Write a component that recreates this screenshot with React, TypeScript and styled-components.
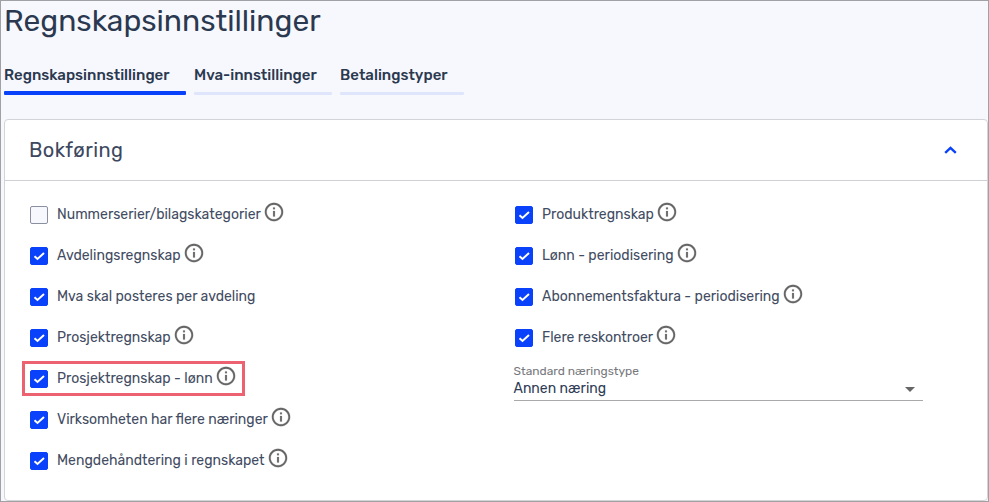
import React from "react";
import styled, { createGlobalStyle } from "styled-components";

const GlobalStyle = createGlobalStyle`
  *, *::before, *::after { box-sizing: border-box; }
  body { margin: 0; }
`;

const Page = styled.div`
  width: 989px;
  height: 502px;
  overflow: hidden;
  display: flex;
  flex-direction: column;
  padding: 0 0 0 3px;
  border: 1px solid #a0a0a5;
  background: #f7f8fd;
  color: #2b3950;
  font-family: Rubik, Roboto, "Liberation Sans", sans-serif;
`;

const Title = styled.h1`
  margin: 0;
  height: 62px;
  padding-top: 1px;
  font-size: 30px;
  line-height: 38px;
  font-weight: 400;
  white-space: nowrap;
`;

const Tabs = styled.nav`
  display: flex;
  gap: 8px;
  height: 32px;
`;

const Tab = styled.a<{ $width: number; $active?: boolean }>`
  width: ${(p) => p.$width}px;
  height: 32px;
  padding-top: 2px;
  font-size: 15px;
  line-height: 20px;
  font-weight: 500;
  white-space: nowrap;
  display: flex;
  flex-direction: column;
  justify-content: space-between;
  &::after {
    content: "";
    height: ${(p) => (p.$active ? 4 : 3)}px;
    border-radius: 1px;
    background: ${(p) => (p.$active ? "#0a41fa" : "#dfe6fb")};
  }
`;

const Card = styled.section`
  margin-top: 24px;
  width: 984px;
  height: 382px;
  flex: none;
  border: 1px solid #d3d4d8;
  border-radius: 4px;
  background: #fff;
`;

const CardHeader = styled.header`
  height: 61px;
  display: flex;
  align-items: center;
  justify-content: space-between;
  padding: 0 30px 0 24px;
  border-bottom: 1px solid #cfd0d4;
`;

const CardTitle = styled.h2`
  margin: 0;
  font-size: 20px;
  line-height: 28px;
  font-weight: 400;
  letter-spacing: 0.4px;
  color: #3d485f;
`;

const Columns = styled.div`
  display: grid;
  grid-template-columns: 485px 410px;
  padding: 13px 0 0 25px;
`;

const Column = styled.div`
  display: flex;
  flex-direction: column;
`;

const Row = styled.div`
  height: 41px;
  display: flex;
  align-items: center;
`;

const Highlight = styled.div`
  width: 223px;
  height: 35px;
  margin: 3px 0 3px -8px;
  padding-left: 5px;
  border: 3px solid #ec6270;
  display: flex;
  align-items: center;
`;

const Box = styled.span<{ $checked: boolean }>`
  flex: none;
  width: 18px;
  height: 18px;
  margin-top: 1px;
  border-radius: 2px;
  border: 1px solid ${(p) => (p.$checked ? "#0a41fa" : "#8b90a0")};
  background: ${(p) => (p.$checked ? "#0a41fa" : "#f7f8fd")};
  display: flex;
  align-items: center;
  justify-content: center;
`;

const Label = styled.span`
  flex: none;
  margin-left: 9px;
  font-size: 14px;
  line-height: 20px;
  white-space: nowrap;
  color: #424c62;
`;

const InfoSvg = styled.svg`
  flex: none;
  margin: -5px 0 0 2px;
  fill: #666;
  stroke: #666;
  stroke-width: 0.2;
`;

const Field = styled.div`
  width: 409px;
  height: 42px;
  margin: 1px 0 0 -1.5px;
  border-bottom: 1px solid #a9a9ac;
`;

const FieldLabel = styled.div`
  padding-top: 4px;
  font-size: 12px;
  line-height: 16px;
  color: #77787d;
`;

const FieldValue = styled.div`
  display: flex;
  align-items: center;
  justify-content: space-between;
  padding-right: 8px;
  font-size: 14px;
  line-height: 20px;
  color: #2f3c55;
`;

function Info() {
  return (
    <InfoSvg width="22" height="22" viewBox="0 0 24 24">
      <path d="M11 7h2v2h-2zm0 4h2v6h-2zm1-9C6.48 2 2 6.48 2 12s4.480 10 10 10 10-4.480 10-10S17.520 2 12 2zm0 18c-4.410 0-8-3.590-8-8s3.590-8 8-8 8 3.590 8 8-3.590 8-8 8z" />
    </InfoSvg>
  );
}

interface Option {
  text: string;
  checked?: boolean;
  info?: boolean;
  highlighted?: boolean;
}

const left: Option[] = [
  { text: "Nummerserier/bilagskategorier", checked: false },
  { text: "Avdelingsregnskap" },
  { text: "Mva skal posteres per avdeling", info: false },
  { text: "Prosjektregnskap" },
  { text: "Prosjektregnskap - lønn", highlighted: true },
  { text: "Virksomheten har flere næringer" },
  { text: "Mengdehåndtering i regnskapet" },
];

const right: Option[] = [
  { text: "Produktregnskap" },
  { text: "Lønn - periodisering" },
  { text: "Abonnementsfaktura - periodisering" },
  { text: "Flere reskontroer" },
];

function OptionRow({ text, checked = true, info = true, highlighted }: Option) {
  const content = (
    <>
      <Box $checked={checked}>
        {checked && (
          <svg width="16" height="16" viewBox="0 0 16 16" fill="none" stroke="#fff" strokeWidth="2">
            <path d="M3.500 8.200 6.500 11 13 5" />
          </svg>
        )}
      </Box>
      <Label>{text}</Label>
      {info && <Info />}
    </>
  );
  return highlighted ? <Highlight>{content}</Highlight> : <Row>{content}</Row>;
}

export default function App() {
  return (
    <>
      <GlobalStyle />
      <Page>
        <Title>Regnskapsinnstillinger</Title>
        <Tabs>
          <Tab $width={182} $active>Regnskapsinnstillinger</Tab>
          <Tab $width={138}>Mva-innstillinger</Tab>
          <Tab $width={124}>Betalingstyper</Tab>
        </Tabs>
        <Card>
          <CardHeader>
            <CardTitle>Bokføring</CardTitle>
            <svg width="13" height="8" viewBox="0 0 13 8" fill="none" stroke="#0a41fa" strokeWidth="2.4">
              <path d="M1.200 6.800 6.500 1.800 11.800 6.800" />
            </svg>
          </CardHeader>
          <Columns>
            <Column>
              {left.map((o) => <OptionRow key={o.text} {...o} />)}
            </Column>
            <Column>
              {right.map((o) => <OptionRow key={o.text} {...o} />)}
              <Field>
                <FieldLabel>Standard næringstype</FieldLabel>
                <FieldValue>
                  Annen næring
                  <svg width="10" height="5" viewBox="0 0 10 5" fill="#666">
                    <path d="M0 0h10L5 5z" />
                  </svg>
                </FieldValue>
              </Field>
            </Column>
          </Columns>
        </Card>
      </Page>
    </>
  );
}
